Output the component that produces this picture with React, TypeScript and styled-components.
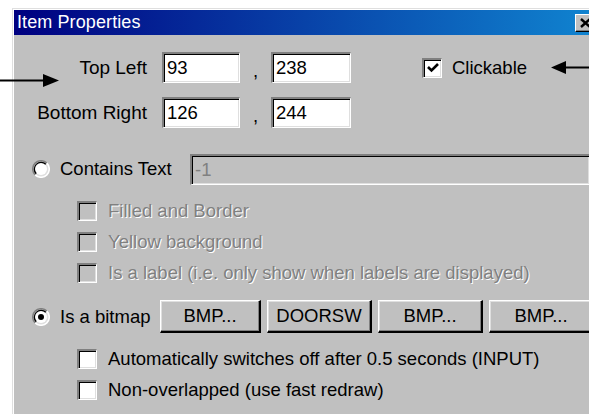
import React from 'react';
import styled, { createGlobalStyle } from 'styled-components';

const GlobalStyle = createGlobalStyle`
  html, body {
    margin: 0;
    background: #ffffff;
    overflow: hidden;
  }
  body {
    font-family: "Liberation Sans", Arial, sans-serif;
  }
`;

const Stage = styled.div`
  position: relative;
  width: 589px;
  height: 414px;
  overflow: hidden;
  padding: 8px 0 0 12px;
  box-sizing: border-box;
`;

const Window = styled.div`
  width: 583px;
  height: 420px;
  box-sizing: border-box;
  background: #c0c0c0;
  border-top: 1px solid #dfdfdf;
  border-left: 1px solid #dfdfdf;
  box-shadow: inset 1px 1px 0 #ffffff;
  padding: 1px 0 0 1px;
`;

const TitleBar = styled.div`
  height: 25px;
  display: flex;
  align-items: center;
  justify-content: space-between;
  padding: 0 0 0 3px;
  background: linear-gradient(to right, #000080, #1084d0);
`;

const TitleText = styled.span`
  color: #ffffff;
  font-size: 18px;
  letter-spacing: 0.1px;
`;

const CloseButton = styled.div`
  width: 20px;
  height: 18px;
  box-sizing: border-box;
  background: #c0c0c0;
  border-top: 1px solid #ffffff;
  border-left: 1px solid #ffffff;
  border-right: 1px solid #000000;
  border-bottom: 1px solid #000000;
  box-shadow: inset -1px -1px 0 #808080;
  display: flex;
  align-items: center;
  justify-content: center;
`;

const Body = styled.div`
  padding: 17px 5px 0 0;
  font-size: 18.5px;
`;

const CoordRow = styled.div`
  display: flex;
  align-items: center;
  height: 31px;
  & + & {
    margin-top: 14px;
  }
`;

const FieldLabel = styled.span`
  width: 133px;
  padding-right: 15px;
  text-align: right;
  font-size: 19px;
  color: #000000;
`;

const TextBox = styled.div<{ $width?: number; $disabled?: boolean }>`
  width: ${(p) => (p.$width ? `${p.$width}px` : 'auto')};
  flex: ${(p) => (p.$width ? 'none' : '1')};
  height: 31px;
  box-sizing: border-box;
  display: flex;
  align-items: center;
  padding-left: 3px;
  background: ${(p) => (p.$disabled ? '#c0c0c0' : '#ffffff')};
  color: ${(p) => (p.$disabled ? '#808080' : '#000000')};
  border-top: 2px solid #808080;
  border-left: 2px solid #808080;
  border-right: 1px solid #ffffff;
  border-bottom: 1px solid #ffffff;
  box-shadow: inset 1px 1px 0 #000000, inset -1px -1px 0 #dfdfdf;
`;

const Comma = styled.span`
  width: 31px;
  text-align: center;
  padding-top: 6px;
`;

const ClickableSpot = styled.div`
  margin-left: 71px;
  display: flex;
  align-items: center;
  gap: 10px;
`;

const OptionRow = styled.div<{ $top: number; $height: number }>`
  display: flex;
  align-items: center;
  height: ${(p) => p.$height}px;
  margin-top: ${(p) => p.$top}px;
  padding-left: 18px;
`;

const OptionLabel = styled.span<{ $width: number }>`
  width: ${(p) => p.$width}px;
  flex: none;
  white-space: nowrap;
`;

const CheckRow = styled.div<{ $top?: number }>`
  display: flex;
  align-items: center;
  height: 31px;
  margin-top: ${(p) => p.$top ?? 0}px;
  padding-left: 63px;
  gap: 11px;
`;

const Label = styled.span<{ $disabled?: boolean }>`
  white-space: nowrap;
  color: ${(p) => (p.$disabled ? '#808080' : '#000000')};
  text-shadow: ${(p) => (p.$disabled ? '1px 1px 0 #ffffff' : 'none')};
`;

const RadioCircle = styled.div`
  width: 18px;
  height: 18px;
  margin-right: 10px;
  flex: none;
`;

const Box = styled.div<{ $disabled?: boolean }>`
  width: 20px;
  height: 20px;
  flex: none;
  box-sizing: border-box;
  background: ${(p) => (p.$disabled ? '#c0c0c0' : '#ffffff')};
  border-top: 2px solid #808080;
  border-left: 2px solid #808080;
  border-right: 1px solid #ffffff;
  border-bottom: 1px solid #ffffff;
  box-shadow: inset 1px 1px 0 #000000, inset -1px -1px 0 #dfdfdf;
  display: flex;
  align-items: center;
  justify-content: center;
`;

const ButtonStrip = styled.div`
  display: flex;
  gap: 6px;
`;

const PushButton = styled.div<{ $width: number }>`
  width: ${(p) => p.$width}px;
  height: 33px;
  flex: none;
  box-sizing: border-box;
  display: flex;
  align-items: center;
  justify-content: center;
  color: #000000;
  background: #c0c0c0;
  border-top: 1px solid #ffffff;
  border-left: 1px solid #ffffff;
  border-right: 2px solid #000000;
  border-bottom: 2px solid #000000;
  box-shadow: inset -1px -1px 0 #808080, inset 1px 1px 0 #dfdfdf;
`;

const Annotations = styled.svg`
  position: absolute;
  left: 0;
  top: 0;
  pointer-events: none;
`;

const Radio: React.FC<{ checked?: boolean }> = ({ checked }) => (
  <RadioCircle>
    <svg width="18" height="18" viewBox="0 0 18 18">
      <path d="M15.4 2.6 A9 9 0 0 0 2.6 15.4" fill="#808080" />
      <path d="M2.6 15.4 A9 9 0 0 0 15.4 2.6" fill="#ffffff" />
      <circle cx="9" cy="9" r="7.5" fill="#dfdfdf" />
      <path d="M14.3 3.7 A7.5 7.5 0 0 0 3.7 14.3" fill="#000000" />
      <circle cx="9" cy="9" r="6" fill="#ffffff" />
      {checked && <circle cx="9" cy="9" r="3" fill="#000000" />}
    </svg>
  </RadioCircle>
);

const CheckBox: React.FC<{ checked?: boolean; disabled?: boolean }> = ({ checked, disabled }) => (
  <Box $disabled={disabled}>
    {checked && (
      <svg width="14" height="14" viewBox="0 0 14 14">
        <path d="M2 6 L5.5 9.5 L12 3" fill="none" stroke="#000" strokeWidth="2.6" />
      </svg>
    )}
  </Box>
);

const App: React.FC = () => {
  return (
    <>
      <GlobalStyle />
      <Stage>
        <Window>
          <TitleBar>
            <TitleText>Item Properties</TitleText>
            <CloseButton>
              <svg width="11" height="10" viewBox="0 0 11 10">
                <path d="M1 1 L10 9 M10 1 L1 9" stroke="#000" strokeWidth="2.4" />
              </svg>
            </CloseButton>
          </TitleBar>
          <Body>
            <CoordRow>
              <FieldLabel>Top Left</FieldLabel>
              <TextBox $width={78}>93</TextBox>
              <Comma>,</Comma>
              <TextBox $width={80}>238</TextBox>
              <ClickableSpot>
                <CheckBox checked />
                <Label>Clickable</Label>
              </ClickableSpot>
            </CoordRow>
            <CoordRow>
              <FieldLabel>Bottom Right</FieldLabel>
              <TextBox $width={78}>126</TextBox>
              <Comma>,</Comma>
              <TextBox $width={80}>244</TextBox>
            </CoordRow>

            <OptionRow $top={25} $height={32}>
              <Radio />
              <OptionLabel $width={130}>Contains Text</OptionLabel>
              <TextBox $disabled>-1</TextBox>
            </OptionRow>
            <CheckRow $top={10}>
              <CheckBox disabled />
              <Label $disabled>Filled and Border</Label>
            </CheckRow>
            <CheckRow>
              <CheckBox disabled />
              <Label $disabled>Yellow background</Label>
            </CheckRow>
            <CheckRow>
              <CheckBox disabled />
              <Label $disabled>Is a label (i.e. only show when labels are displayed)</Label>
            </CheckRow>

            <OptionRow $top={12} $height={33}>
              <Radio checked />
              <OptionLabel $width={100}>Is a bitmap</OptionLabel>
              <ButtonStrip>
                <PushButton $width={101}>BMP...</PushButton>
                <PushButton $width={105}>DOORSW</PushButton>
                <PushButton $width={105}>BMP...</PushButton>
                <PushButton $width={105}>BMP...</PushButton>
              </ButtonStrip>
            </OptionRow>
            <CheckRow $top={10}>
              <CheckBox />
              <Label>Automatically switches off after 0.5 seconds (INPUT)</Label>
            </CheckRow>
            <CheckRow>
              <CheckBox />
              <Label>Non-overlapped (use fast redraw)</Label>
            </CheckRow>
          </Body>
        </Window>
        <Annotations width="589" height="414" viewBox="0 0 589 414">
          <line x1="0" y1="80.5" x2="46" y2="80.5" stroke="#000" strokeWidth="2" />
          <polygon points="43,74 59,80.5 43,87" fill="#000" />
          <line x1="563" y1="67.5" x2="589" y2="67.5" stroke="#000" strokeWidth="2" />
          <polygon points="566,61 551,67.5 566,74" fill="#000" />
        </Annotations>
      </Stage>
    </>
  );
};

export default App;
